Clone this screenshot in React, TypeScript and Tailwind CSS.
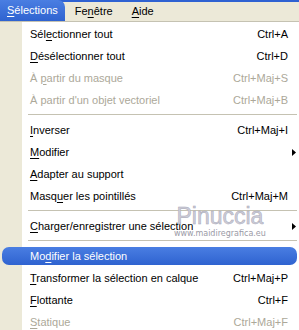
import React from 'react';

type Item =
  | { sep: true }
  | {
      sep?: false;
      label: string;
      u: number;
      shortcut?: string;
      sub?: boolean;
      disabled?: boolean;
      active?: boolean;
    };

const items: Item[] = [
  { label: 'Sélectionner tout', u: 3, shortcut: 'Ctrl+A' },
  { label: 'Désélectionner tout', u: 0, shortcut: 'Ctrl+D' },
  { label: 'À partir du masque', u: 2, shortcut: 'Ctrl+Maj+S', disabled: true },
  { label: "À partir d'un objet vectoriel", u: -1, shortcut: 'Ctrl+Maj+B', disabled: true },
  { sep: true },
  { label: 'Inverser', u: 0, shortcut: 'Ctrl+Maj+I' },
  { label: 'Modifier', u: 0, sub: true },
  { label: 'Adapter au support', u: 0 },
  { label: 'Masquer les pointillés', u: 4, shortcut: 'Ctrl+Maj+M' },
  { sep: true },
  { label: 'Charger/enregistrer une sélection', u: 0, sub: true },
  { sep: true },
  { label: 'Modifier la sélection', u: 2, active: true },
  { label: 'Transformer la sélection en calque', u: 0, shortcut: 'Ctrl+Maj+P' },
  { label: 'Flottante', u: 0, shortcut: 'Ctrl+F' },
  { label: 'Statique', u: 0, shortcut: 'Ctrl+Maj+F', disabled: true },
];

function Underlined({ text, u }: { text: string; u: number }) {
  if (u < 0) return <>{text}</>;
  return (
    <>
      {text.slice(0, u)}
      <span className="underline underline-offset-[2px]">{text[u]}</span>
      {text.slice(u + 1)}
    </>
  );
}

function Arrow() {
  return (
    <svg width="4" height="7" viewBox="0 0 4 7" className="block">
      <path d="M0 0 L4 3.5 L0 7 Z" fill="currentColor" />
    </svg>
  );
}

export default function App() {
  return (
    <div
      className="w-[299px] h-[330px] overflow-hidden bg-white text-[11px] leading-none text-black relative"
      style={{ fontFamily: '"Liberation Sans", Arial, sans-serif' }}
    >
      {/* menu bar */}
      <div className="h-[22px] bg-[#ece9d8] border-t-2 border-[#2f62d2] border-b border-b-[#c5c2b2] flex items-stretch">
        <div className="-mt-[2px] h-[21px] px-[7px] flex items-center text-white rounded-tr-[7px] bg-[linear-gradient(to_bottom,#4a7ee2,#2f63d0)]">
          <Underlined text="Sélections" u={0} />
        </div>
        <div className="pl-[10px] flex items-center -mt-[1px]">
          <Underlined text="Fenêtre" u={2} />
        </div>
        <div className="pl-[19px] flex items-center -mt-[1px]">
          <Underlined text="Aide" u={0} />
        </div>
      </div>

      {/* dropdown */}
      <div className="bg-[linear-gradient(to_right,#ece9d8_22px,#ffffff_22px)] pt-[1px]">
        {items.map((it, i) =>
          it.sep ? (
            <div key={i} className="h-[8px] pl-[28px] pr-[2px] pt-[3px]">
              <div className="h-px bg-[#c5c2b2]" />
            </div>
          ) : (
            <div key={i} className="h-[22px] flex items-center">
              <div
                className={
                  'flex items-center w-full ' +
                  (it.active
                    ? 'mx-[2px] h-[18px] rounded-[7px] text-white bg-[linear-gradient(to_bottom,#4a7ee2,#2f63d0)] pl-[28px]'
                    : 'h-[22px] pl-[30px] ' + (it.disabled ? 'text-[#aca899]' : 'text-black'))
                }
              >
                <span className="flex-1 whitespace-nowrap">
                  <Underlined text={it.label} u={it.u} />
                </span>
                <span className="whitespace-nowrap">{it.shortcut}</span>
                <span className={'w-[11px] flex justify-center ' + (it.active ? 'mr-[-2px]' : '')}>
                  {it.sub ? <Arrow /> : null}
                </span>
              </div>
            </div>
          ),
        )}
      </div>

      {/* watermark */}
      <div className="absolute left-[174px] top-[205px] flex flex-col items-center pointer-events-none">
        <span
          className="text-[23px] leading-none text-[#cdcdd8]"
          style={{ fontFamily: '"Liberation Sans", sans-serif', WebkitTextStroke: '0.5px #a9a9b8' }}
        >
          Pinuccia
        </span>
        <span className="text-[8px] leading-none text-[#9a9aa6] mt-[2px]" style={{ fontFamily: '"DejaVu Sans", sans-serif' }}>
          www.maidiregrafica.eu
        </span>
      </div>
    </div>
  );
}
